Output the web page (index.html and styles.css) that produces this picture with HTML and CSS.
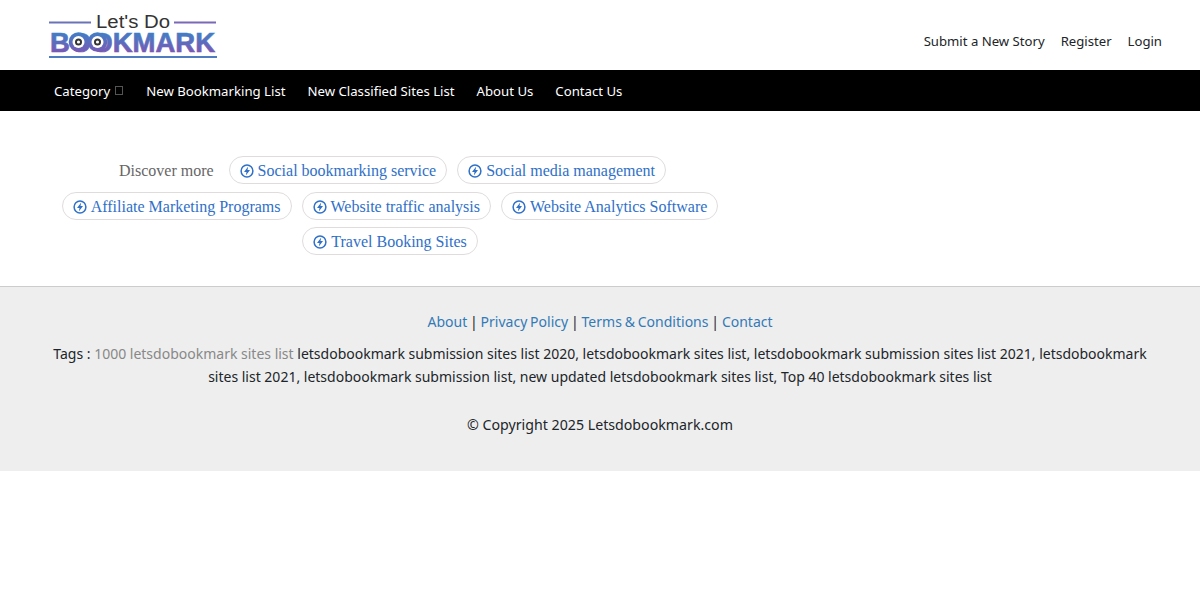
FILE: index.html
```html
<!DOCTYPE html>
<html lang="en">
<head>
<meta charset="utf-8">
<title>Let's Do Bookmark</title>
<link rel="stylesheet" href="styles.css">
</head>
<body>
<header class="topbar">
  <a class="logo" href="#">
    <svg width="170" height="52" viewBox="0 0 170 52">
      <defs>
        <linearGradient id="lg" gradientUnits="userSpaceOnUse" x1="0" y1="24" x2="0" y2="45">
          <stop offset="0" stop-color="#3f80c6"/>
          <stop offset="1" stop-color="#7a58b4"/>
        </linearGradient>
      </defs>
      <rect x="1" y="13.5" width="42" height="2" fill="#6a72b8"/>
      <rect x="126" y="13.5" width="42" height="2" fill="#7a68b8"/>
      <text x="48" y="20" class="logo-top" textLength="74" lengthAdjust="spacingAndGlyphs">Let's Do</text>
      <text x="2" y="44" class="logo-main" fill="url(#lg)" stroke="url(#lg)" textLength="165" lengthAdjust="spacingAndGlyphs">BOOKMARK</text>
      <circle cx="30.5" cy="34" r="9.8" fill="url(#lg)"/>
      <circle cx="30.5" cy="34" r="6" fill="#fff"/>
      <circle cx="30.5" cy="34" r="3.5" fill="#333"/>
      <circle cx="30.5" cy="34" r="1.6" fill="#fff"/>
      <circle cx="49.5" cy="34" r="9.8" fill="url(#lg)"/>
      <circle cx="49.5" cy="34" r="6" fill="#fff"/>
      <circle cx="49.5" cy="34" r="3.5" fill="#333"/>
      <circle cx="49.5" cy="34" r="1.6" fill="#fff"/>
      <rect x="1" y="48" width="168" height="2" fill="#4f7cc0"/>
    </svg>
  </a>
  <nav class="user-links">
    <a href="#">Submit a New Story</a>
    <a href="#">Register</a>
    <a href="#">Login</a>
  </nav>
</header>
<nav class="mainnav">
  <a class="cat" href="#">Category <span class="tofu"></span></a>
  <a href="#">New Bookmarking List</a>
  <a href="#">New Classified Sites List</a>
  <a href="#">About Us</a>
  <a href="#">Contact Us</a>
</nav>
<main class="content">
  <div class="chips">
    <span class="chips-label">Discover more</span>
    <a class="chip" href="#"><svg class="bolt" viewBox="0 0 14 14"><circle cx="7" cy="7" r="5.9"/><path d="M8.2 2.6 4 8h2.5l-.7 3.4L10 6H7.5z"/></svg>Social bookmarking service</a>
    <a class="chip" href="#"><svg class="bolt" viewBox="0 0 14 14"><circle cx="7" cy="7" r="5.9"/><path d="M8.2 2.6 4 8h2.5l-.7 3.4L10 6H7.5z"/></svg>Social media management</a>
    <a class="chip" href="#"><svg class="bolt" viewBox="0 0 14 14"><circle cx="7" cy="7" r="5.9"/><path d="M8.2 2.6 4 8h2.5l-.7 3.4L10 6H7.5z"/></svg>Affiliate Marketing Programs</a>
    <a class="chip" href="#"><svg class="bolt" viewBox="0 0 14 14"><circle cx="7" cy="7" r="5.9"/><path d="M8.2 2.6 4 8h2.5l-.7 3.4L10 6H7.5z"/></svg>Website traffic analysis</a>
    <a class="chip" href="#"><svg class="bolt" viewBox="0 0 14 14"><circle cx="7" cy="7" r="5.9"/><path d="M8.2 2.6 4 8h2.5l-.7 3.4L10 6H7.5z"/></svg>Website Analytics Software</a>
    <a class="chip" href="#"><svg class="bolt" viewBox="0 0 14 14"><circle cx="7" cy="7" r="5.9"/><path d="M8.2 2.6 4 8h2.5l-.7 3.4L10 6H7.5z"/></svg>Travel Booking Sites</a>
  </div>
</main>
<footer class="footer">
  <p class="foot-links"><a href="#">About</a> | <a href="#">Privacy Policy</a> | <a href="#">Terms &amp; Conditions</a> | <a href="#">Contact</a></p>
  <p class="tags">Tags : <span class="muted">1000 letsdobookmark sites list</span> letsdobookmark submission sites list 2020, letsdobookmark sites list, letsdobookmark submission sites list 2021, letsdobookmark sites list 2021, letsdobookmark submission list, new updated letsdobookmark sites list, Top 40 letsdobookmark sites list</p>
  <p class="copy">© Copyright 2025 Letsdobookmark.com</p>
</footer>
</body>
</html>
```
FILE: styles.css
```css
* { box-sizing: border-box; }
body {
  margin: 0;
  background: #fff;
  font-family: "Noto Sans", "Open Sans", sans-serif;
  font-size: 13.2px;
  color: #212529;
}
a { text-decoration: none; color: inherit; }
.topbar {
  height: 70px;
  display: flex;
  justify-content: space-between;
  padding: 8px 38px 0 48px;
}
.logo { display: block; height: 52px; }
.logo svg { display: block; }
.logo-top { font-family: "Liberation Sans", sans-serif; font-size: 18px; fill: #333; }
.logo-main { font-family: "Liberation Sans", sans-serif; font-weight: 700; font-size: 28px; stroke-width: 0.7px; }
.user-links { display: flex; gap: 16px; padding-top: 24px; font-size: 13.15px; color: #212529; }
.mainnav {
  height: 41px;
  background: #000;
  display: flex;
  align-items: center;
  gap: 22px;
  padding-left: 54px;
  color: #fff;
}
.cat { display: flex; align-items: center; gap: 5px; margin-right: 1px; }
.tofu { display: block; width: 8px; height: 9px; border: 1px solid #555; }
.content { padding: 41px 0 27px 50px; }
.chips {
  width: 680px;
  display: flex;
  flex-wrap: wrap;
  justify-content: center;
  align-items: center;
}
.chips-label {
  font-family: "Liberation Serif", serif;
  font-size: 16px;
  color: #666;
  margin: 2px 10px 0;
}
.chip {
  display: inline-flex;
  align-items: center;
  height: 28px;
  margin: 4px 5px 3.5px;
  padding: 2px 10px 0;
  border: 1px solid #e0dcdc;
  border-radius: 14px;
  font-family: "Liberation Serif", serif;
  font-size: 16px;
  color: #2f70c8;
}
.bolt { width: 14px; height: 14px; margin-right: 4px; flex: none; }
.bolt circle { fill: none; stroke: #2f70c8; stroke-width: 1.5; }
.bolt path { fill: #2f70c8; }
.footer {
  height: 185px;
  background: #eee;
  border-top: 1px solid #ccc;
  padding: 23px 48px 0;
  text-align: center;
  font-size: 14px;
  line-height: 23px;
}
.footer p { margin: 0; }
.foot-links { word-spacing: -0.8px; }
.foot-links a { color: #337ab7; }
.footer .tags { margin-top: 9px; }
.muted { color: #888; }
.footer .copy { margin-top: 25px; font-size: 14.2px; }
```
